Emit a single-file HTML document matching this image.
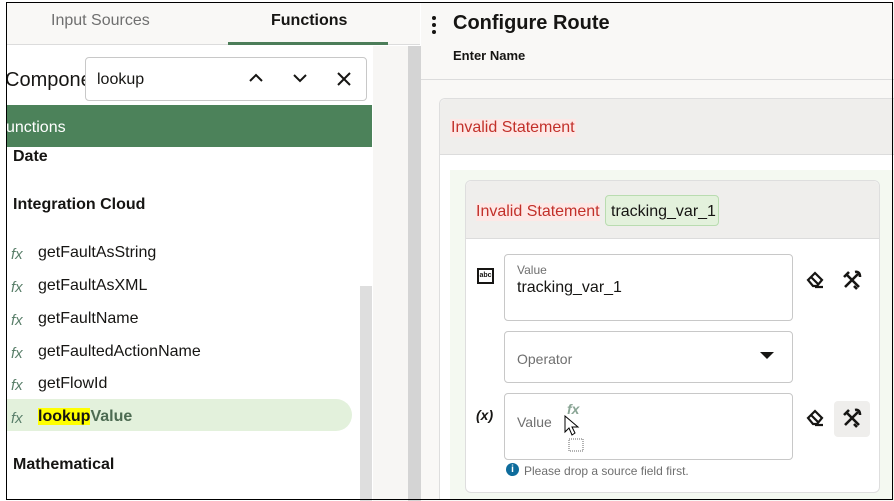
<!DOCTYPE html>
<html style="overflow:hidden;width:894px;height:501px"><head><meta charset="utf-8"><style>
*{box-sizing:border-box;margin:0;padding:0}
body{width:894px;height:501px;overflow:hidden;background:#fff;font-family:"Liberation Sans",sans-serif;position:relative;color:#161513}
.a{position:absolute}
.fx{position:absolute;left:11px;font-family:"Liberation Sans",sans-serif;font-style:italic;color:#5a7f6a;font-size:15px}
.it{position:absolute;left:38px;font-size:16px;color:#161513}
.b{font-weight:bold}
</style></head><body>
<div class="a" style="left:7px;top:2px;width:413px;height:43px;background:#f9f8f6;border-bottom:1px solid #dcdcdc"></div>
<div class="a" style="left:51px;top:12px;font-size:16px;color:#6f6f6f">Input Sources</div>
<div class="a b" style="left:271px;top:12px;font-size:16px">Functions</div>
<div class="a" style="left:228px;top:42px;width:160px;height:3px;background:#4c7d59"></div>
<div class="a" style="left:373px;top:46px;width:35px;height:455px;background:#f7f6f4"></div>
<div class="a" style="left:408px;top:46px;width:13px;height:455px;background:#d4d4d4"></div>
<div class="a" style="left:360px;top:286px;width:12px;height:215px;background:#dedede"></div>
<div class="a" style="left:5px;top:69px;font-size:20px">Compone</div>
<div class="a" style="left:85px;top:57px;width:282px;height:44px;background:#fff;border:1px solid #c8c8c8;border-radius:4px"></div>
<div class="a" style="left:97px;top:71px;font-size:16px">lookup</div>
<svg class="a" style="left:248px;top:72px" width="16" height="12"><path d="M2 9 L8 3 L14 9" stroke="#161513" stroke-width="2" fill="none"/></svg>
<svg class="a" style="left:292px;top:72px" width="16" height="12"><path d="M2 3 L8 9 L14 3" stroke="#161513" stroke-width="2" fill="none"/></svg>
<svg class="a" style="left:336px;top:71px" width="16" height="16"><path d="M2 2 L14 14 M14 2 L2 14" stroke="#161513" stroke-width="2"/></svg>
<div class="a" style="left:7px;top:105px;width:365px;height:42px;background:#4c825a"></div>
<div class="a" style="left:6px;top:119px;font-size:16px;color:#fff">unctions</div>
<div class="a b" style="left:13px;top:148px;font-size:16px">Date</div>
<div class="a b" style="left:13px;top:196px;font-size:16px">Integration Cloud</div>
<div class="a" style="left:7px;top:399px;width:345px;height:32px;background:#e3f1dc;border-radius:0 16px 16px 0"></div>
<span class="fx" style="top:246px">fx</span><span class="it" style="top:244px">getFaultAsString</span>
<span class="fx" style="top:279px">fx</span><span class="it" style="top:277px">getFaultAsXML</span>
<span class="fx" style="top:312px">fx</span><span class="it" style="top:310px">getFaultName</span>
<span class="fx" style="top:345px">fx</span><span class="it" style="top:343px">getFaultedActionName</span>
<span class="fx" style="top:377px">fx</span><span class="it" style="top:375px">getFlowId</span>
<span class="fx" style="top:410px">fx</span><span class="it b" style="top:408px;color:#4d6b52"><span style="background:#ffff00;color:#161513">lookup</span>Value</span>
<div class="a b" style="left:13px;top:456px;font-size:16px">Mathematical</div>
<div class="a" style="left:421px;top:2px;width:473px;height:499px;background:#f9f8f6"></div>
<div class="a" style="left:421px;top:79px;width:473px;height:1px;background:#dcdcdc"></div>
<div class="a" style="left:432px;top:16px;width:4px;height:4px;border-radius:2px;background:#161513;box-shadow:0 7px 0 #161513,0 14px 0 #161513"></div>
<div class="a b" style="left:453px;top:12px;font-size:20px">Configure Route</div>
<div class="a b" style="left:453px;top:48px;font-size:13px">Enter Name</div>
<div class="a" style="left:439px;top:98px;width:460px;height:402px;background:#fff;border:1px solid #dedede;border-bottom:none;border-radius:6px 0 0 0"></div>
<div class="a" style="left:440px;top:99px;width:454px;height:56px;background:#efeeec;border-bottom:1px solid #dcdcdc;border-radius:6px 0 0 0"></div>
<div class="a" style="left:450px;top:119px;font-size:16px;color:#c2302a;background:#fde8e6;padding:0 1px">Invalid Statement</div>
<div class="a" style="left:450px;top:170px;width:444px;height:330px;background:#f4f9f1"></div>
<div class="a" style="left:465px;top:180px;width:415px;height:313px;background:#fff;border:1px solid #dedede;border-radius:6px"></div>
<div class="a" style="left:466px;top:181px;width:413px;height:58px;background:#efeeec;border-bottom:1px solid #dcdcdc;border-radius:6px 6px 0 0"></div>
<div class="a" style="left:476px;top:203px;font-size:16px;color:#c2302a;background:#fde8e6">Invalid Statement</div>
<div class="a" style="left:605px;top:195px;width:114px;height:31px;background:#e3f1dc;border:1px solid #b9dcb0;border-radius:4px;font-size:16px;padding:7px 0 0 5px">tracking_var_1</div>
<div class="a" style="left:477px;top:268px;width:17px;height:16px;border:2px solid #161513;font-size:7px;font-weight:bold;text-align:center;line-height:12px">abc</div>
<div class="a" style="left:504px;top:254px;width:289px;height:67px;border:1px solid #c8c8c8;border-radius:4px"></div>
<div class="a" style="left:517px;top:263px;font-size:12px;color:#6f6f6f">Value</div>
<div class="a" style="left:517px;top:279px;font-size:16px">tracking_var_1</div>
<div class="a" style="left:504px;top:331px;width:289px;height:52px;border:1px solid #c8c8c8;border-radius:4px"></div>
<div class="a" style="left:517px;top:351px;font-size:14px;color:#6f6f6f">Operator</div>
<svg class="a" style="left:760px;top:352px" width="14" height="8"><path d="M0 0 H14 L7 7Z" fill="#161513"/></svg>
<div class="a" style="left:504px;top:393px;width:289px;height:67px;border:1px solid #c8c8c8;border-radius:4px"></div>
<div class="a" style="left:517px;top:414px;font-size:14px;color:#6f6f6f">Value</div>
<div class="a" style="left:567px;top:401px;font-style:italic;font-weight:bold;color:#8aa595;font-size:14px">fx</div>
<svg class="a" style="left:564px;top:415px" width="24" height="40"><path d="M1 1 L1 17 L5 13 L8 20 L11 18 L8 12 L14 12Z" fill="#fff" stroke="#000"/><rect x="5" y="24" width="14" height="12" fill="none" stroke="#666" stroke-dasharray="1 1"/></svg>
<div class="a b" style="left:476px;top:407px;font-size:14px;font-style:italic">(x)</div>
<div class="a" style="left:506px;top:463px;width:13px;height:13px;border-radius:7px;background:#0e6c9c;color:#fff;font-size:10px;font-weight:bold;text-align:center;line-height:13px">i</div>
<div class="a" style="left:524px;top:464px;font-size:12px;color:#6f6f6f">Please drop a source field first.</div>
<div class="a" style="left:834px;top:401px;width:36px;height:36px;background:#efeeec;border-radius:4px"></div>
<svg class="a" style="left:806px;top:270px" width="20" height="20"><path d="M2 10 L9 3 L16 10 L11 16 H7Z M5 7 L12 14 M9 17 H17" stroke="#161513" stroke-width="2.2" fill="none"/></svg>
<svg class="a" style="left:806px;top:408px" width="20" height="20"><path d="M2 10 L9 3 L16 10 L11 16 H7Z M5 7 L12 14 M9 17 H17" stroke="#161513" stroke-width="2.2" fill="none"/></svg>
<svg class="a" style="left:842px;top:270px" width="20" height="20"><path d="M4 4 L17 17 M16 4 L3 17 M2 7 L7 2 M13 2 Q18 1 18 7 M12 16 L15 19" stroke="#161513" stroke-width="2.6" fill="none"/></svg>
<svg class="a" style="left:842px;top:408px" width="20" height="20"><path d="M4 4 L17 17 M16 4 L3 17 M2 7 L7 2 M13 2 Q18 1 18 7 M12 16 L15 19" stroke="#161513" stroke-width="2.6" fill="none"/></svg>
<div class="a" style="left:6px;top:2px;width:887px;height:498px;border:1px solid #000"></div>
</body></html>
